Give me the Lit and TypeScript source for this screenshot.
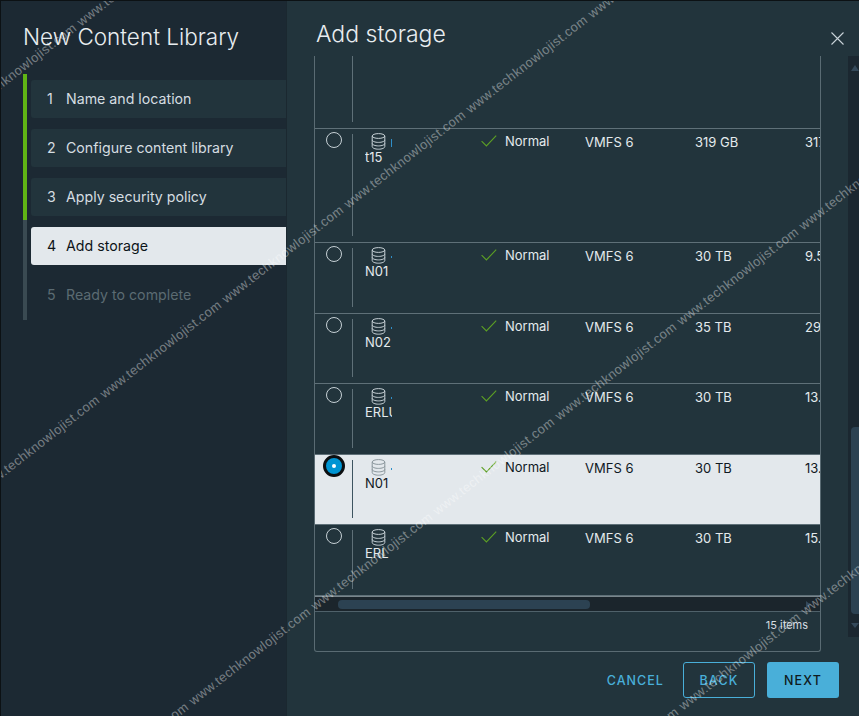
import { LitElement, html, css, svg } from "lit";
import { customElement } from "lit/decorators.js";

interface Row {
  h: number;
  name?: string;
  cap?: string;
  free?: string;
  sel?: boolean;
  sliver?: number;
}

const ROWS: Row[] = [
  { h: 73 },
  { h: 114, name: "t15", cap: "319 GB", free: "317", sliver: 8 },
  { h: 71, name: "N01", cap: "30 TB", free: "9.5", sliver: 2 },
  { h: 70, name: "N02", cap: "35 TB", free: "29", sliver: 2 },
  { h: 71, name: "ERLU", cap: "30 TB", free: "13.", sliver: 2 },
  { h: 70, name: "N01", cap: "30 TB", free: "13.", sel: true, sliver: 2 },
  { h: 71, name: "ERL", cap: "30 TB", free: "15.", sliver: 0 },
];

const STEPS = [
  { n: 1, label: "Name and location", cls: "done" },
  { n: 2, label: "Configure content library", cls: "done" },
  { n: 3, label: "Apply security policy", cls: "done" },
  { n: 4, label: "Add storage", cls: "active" },
  { n: 5, label: "Ready to complete", cls: "off" },
];

const MARK_LINES = [
  { x: -39, y: 124, n: 2 },
  { x: -138, y: 591, n: 7 },
  { x: 73, y: 803, n: 7 },
  { x: 563, y: 808, n: 3 },
];
const MARKS = MARK_LINES.flatMap((l) =>
  Array.from({ length: l.n }, (_, i) => ({ x: l.x + i * 122, y: l.y - i * 95 }))
);

const dbIcon = svg`<svg class="db" width="15" height="17" viewBox="0 0 15 17" fill="none" stroke="currentColor" stroke-width="1">
  <ellipse cx="7.5" cy="3" rx="6.3" ry="2.4"/>
  <path d="M1.2 3v10.6c0 1.4 2.8 2.6 6.3 2.6s6.3-1.2 6.3-2.6V3"/>
  <path d="M1.2 6.9c0 1.4 2.8 2.5 6.3 2.5s6.3-1.1 6.3-2.5"/>
  <path d="M1.2 10.4c0 1.4 2.8 2.5 6.3 2.5s6.3-1.1 6.3-2.5"/>
</svg>`;

const checkIcon = svg`<svg class="check" width="16" height="12" viewBox="0 0 16 12" fill="none" stroke="#5c9f24" stroke-width="1.1">
  <path d="M0.6 6.2 5.4 11 15.2 0.6"/>
</svg>`;

@customElement("app-root")
export class AppRoot extends LitElement {
  static styles = css`
    :host {
      display: block;
      width: 859px;
      height: 716px;
      overflow: hidden;
      font-family: Inter, "Noto Sans", sans-serif;
    }
    .page {
      position: relative;
      box-sizing: border-box;
      width: 859px;
      height: 716px;
      display: flex;
      border-top: 1px solid #0c1114;
      border-left: 1px solid #0c1114;
      overflow: hidden;
      background: #22343c;
    }
    .side {
      width: 285px;
      flex: none;
      box-sizing: border-box;
      padding: 21px 0 0 22px;
      background: #1c2933;
    }
    .side h1 {
      margin: 0 0 22px;
      font-size: 22.5px;
      line-height: 30px;
      font-weight: 300;
      color: #e8edf0;
      white-space: nowrap;
    }
    .wizard {
      display: flex;
    }
    .rail {
      width: 4px;
      margin-right: 4px;
      flex: none;
      display: flex;
      flex-direction: column;
    }
    .rail .g {
      height: 146px;
      background: #60b515;
    }
    .rail .r {
      height: 100px;
      background: #3a4a52;
    }
    .steps {
      flex: 1;
      padding-top: 6px;
      display: flex;
      flex-direction: column;
      gap: 11px;
    }
    .step {
      height: 38px;
      box-sizing: border-box;
      display: flex;
      align-items: center;
      padding: 0 0 2px 16px;
      border-radius: 3px 0 0 3px;
      font-size: 14.2px;
      color: #d5dde1;
    }
    .step .n {
      width: 19px;
      flex: none;
    }
    .step.done {
      background: #22343c;
    }
    .step.active {
      background: #e3e8ec;
      color: #0d1418;
    }
    .step.off {
      color: #5b6b72;
    }
    .main {
      flex: 1;
      min-width: 0;
      display: flex;
      flex-direction: column;
      border-left: 1px solid #1b2830;
      background: #22343c;
    }
    .head {
      height: 55px;
      box-sizing: border-box;
      flex: none;
      display: flex;
      justify-content: space-between;
      padding: 19px 15px 0 29px;
    }
    .head h2 {
      margin: 0;
      font-size: 23px;
      line-height: 28px;
      font-weight: 300;
      color: #e8edf0;
    }
    .close {
      margin-top: 12px;
    }
    .content {
      display: flex;
      justify-content: space-between;
      align-items: flex-start;
      padding-left: 27px;
    }
    .table {
      width: 507px;
      height: 596px;
      box-sizing: border-box;
      border: 1px solid #5a6b73;
      border-top: none;
      border-radius: 0 0 3px 3px;
      display: flex;
      flex-direction: column;
    }
    .body {
      height: 540px;
      flex: none;
      overflow: hidden;
    }
    .row {
      box-sizing: border-box;
      display: grid;
      grid-template-columns: 37px 129px 104px 110px 110px 15px;
      border-bottom: 1px solid #5f7078;
      font-size: 13px;
      line-height: 16px;
      color: #e4eaed;
      overflow: hidden;
    }
    .row.sel {
      background: #e3e8ec;
      color: #10191f;
      border-bottom-color: #5f7078;
    }
    .radio {
      padding: 3px 0 0 11px;
    }
    .radio i {
      display: block;
      box-sizing: border-box;
      width: 16px;
      height: 16px;
      border: 1px solid #c6d0d5;
      border-radius: 50%;
    }
    .sel .radio {
      padding: 0 0 0 8px;
    }
    .sel .radio i {
      width: 22px;
      height: 22px;
      border: 3px solid #0c0f11;
      background: #0095d3;
      display: flex;
      align-items: center;
      justify-content: center;
    }
    .sel .radio i::after {
      content: "";
      width: 4px;
      height: 4px;
      border-radius: 50%;
      background: #fff;
    }
    .namecell {
      margin: 5px 0 6px;
      border-left: 1px solid #5f7078;
      padding-left: 12px;
    }
    .row.top .namecell {
      margin-top: 0;
    }
    .sel .namecell {
      border-left-color: #3d5460;
    }
    .iconline {
      width: 27px;
      height: 16px;
      margin-top: -1px;
      display: flex;
      align-items: center;
      justify-content: space-between;
    }
    .db {
      margin-left: 6px;
      color: #c6d0d5;
    }
    .sel .db {
      color: #8a969c;
    }
    .sliver {
      width: 1px;
      margin-top: 3px;
      background: #2f8fc9;
    }
    .name {
      width: 27px;
      overflow: hidden;
      white-space: nowrap;
    }
    .status {
      display: flex;
      align-items: flex-start;
      gap: 8px;
      padding-top: 4px;
    }
    .check {
      margin-top: 2px;
      flex: none;
    }
    .cell {
      padding-top: 5px;
      white-space: nowrap;
    }
    .clip {
      overflow: hidden;
    }
    .hbar {
      height: 16px;
      flex: none;
      box-sizing: border-box;
      border-top: 1px solid #7a868c;
      border-bottom: 1px solid #4f616a;
      background: #1b252c;
      padding: 3px 0 0 23px;
      display: flex;
    }
    .hthumb {
      width: 252px;
      height: 9px;
      border-radius: 4px;
      background: #2c4252;
    }
    .harrow {
      margin-left: 216px;
      margin-top: 1px;
      width: 0;
      height: 0;
      border-left: 5px solid #34495a;
      border-top: 4px solid transparent;
      border-bottom: 4px solid transparent;
    }
    .foot {
      flex: 1;
      display: flex;
      align-items: center;
      justify-content: flex-end;
      padding: 0 12px 13px 0;
      font-size: 11px;
      color: #d5dde1;
    }
    .vbar {
      width: 11px;
      height: 581px;
      box-sizing: border-box;
      flex: none;
      background: #1b2730;
      padding: 9px 0 9px 3px;
      display: flex;
      flex-direction: column;
      align-items: flex-start;
    }
    .up,
    .down {
      width: 0;
      height: 0;
      border-left: 4px solid transparent;
      border-right: 4px solid transparent;
    }
    .up {
      border-bottom: 6px solid #34495a;
    }
    .down {
      border-top: 5px solid #34495a;
    }
    .vspace {
      flex: 1;
    }
    .vthumb {
      width: 8px;
      height: 187px;
      margin-bottom: 9px;
      border-radius: 4px 0 0 4px;
      background: #2c4252;
    }
    .actions {
      display: flex;
      justify-content: flex-end;
      align-items: center;
      gap: 12px;
      margin-top: 10px;
      padding-right: 20px;
    }
    .btn {
      box-sizing: border-box;
      width: 72px;
      height: 36px;
      display: flex;
      align-items: center;
      justify-content: center;
      font-size: 12.5px;
      font-weight: 500;
      letter-spacing: 1.2px;
      border-radius: 3px;
      color: #49afd9;
    }
    .btn.link {
      width: auto;
      margin-right: 7px;
      letter-spacing: 1.05px;
    }
    .btn.outline {
      border: 1px solid #49afd9;
    }
    .btn.solid {
      background: #49afd9;
      color: #0f1a20;
    }
    .marks {
      position: absolute;
      inset: -1px 0 0 -1px;
      pointer-events: none;
      overflow: hidden;
    }
    .mark {
      position: absolute;
      font-family: "Liberation Sans", sans-serif;
      font-size: 13px;
      line-height: 14px;
      letter-spacing: 0.45px;
      white-space: nowrap;
      color: rgba(255, 255, 255, 0.4);
      transform-origin: 0 100%;
      transform: rotate(-37.9deg);
    }
  `;

  private renderRow(r: Row, i: number) {
    const body = r.name
      ? html`
          <div class="radio"><i></i></div>
          <div class="namecell">
            <div class="iconline">
              ${dbIcon}
              <span class="sliver" style="height:${r.sliver}px"></span>
            </div>
            <div class="name">${r.name}</div>
          </div>
          <div class="status">${checkIcon}<span>Normal</span></div>
          <div class="cell">VMFS 6</div>
          <div class="cell">${r.cap}</div>
          <div class="cell clip">${r.free}</div>
        `
      : html`<div></div><div class="namecell"></div>`;
    return html`<div
      class="row ${r.sel ? "sel" : ""} ${i === 0 ? "top" : ""}"
      style="height:${r.h}px"
    >
      ${body}
    </div>`;
  }

  render() {
    return html`
      <div class="page">
        <aside class="side">
          <h1>New Content Library</h1>
          <div class="wizard">
            <div class="rail"><div class="g"></div><div class="r"></div></div>
            <div class="steps">
              ${STEPS.map(
                (s) => html`<div class="step ${s.cls}">
                  <span class="n">${s.n}</span><span>${s.label}</span>
                </div>`
              )}
            </div>
          </div>
        </aside>
        <section class="main">
          <header class="head">
            <h2>Add storage</h2>
            <svg class="close" width="13" height="13" viewBox="0 0 13 13" stroke="#c9d3d9" stroke-width="1.1">
              <path d="M0.5 0.5 12.5 12.5M12.5 0.5 0.5 12.5" />
            </svg>
          </header>
          <div class="content">
            <div class="table">
              <div class="body">${ROWS.map((r, i) => this.renderRow(r, i))}</div>
              <div class="hbar"><div class="hthumb"></div><div class="harrow"></div></div>
              <div class="foot">15 items</div>
            </div>
            <div class="vbar">
              <div class="up"></div>
              <div class="vspace"></div>
              <div class="vthumb"></div>
              <div class="down"></div>
            </div>
          </div>
          <div class="actions">
            <div class="btn link">CANCEL</div>
            <div class="btn outline">BACK</div>
            <div class="btn solid">NEXT</div>
          </div>
        </section>
        <div class="marks">
          ${MARKS.map(
            (m) => html`<span class="mark" style="left:${m.x}px;top:${m.y - 14}px">www.techknowlojist.com</span>`
          )}
        </div>
      </div>
    `;
  }
}
